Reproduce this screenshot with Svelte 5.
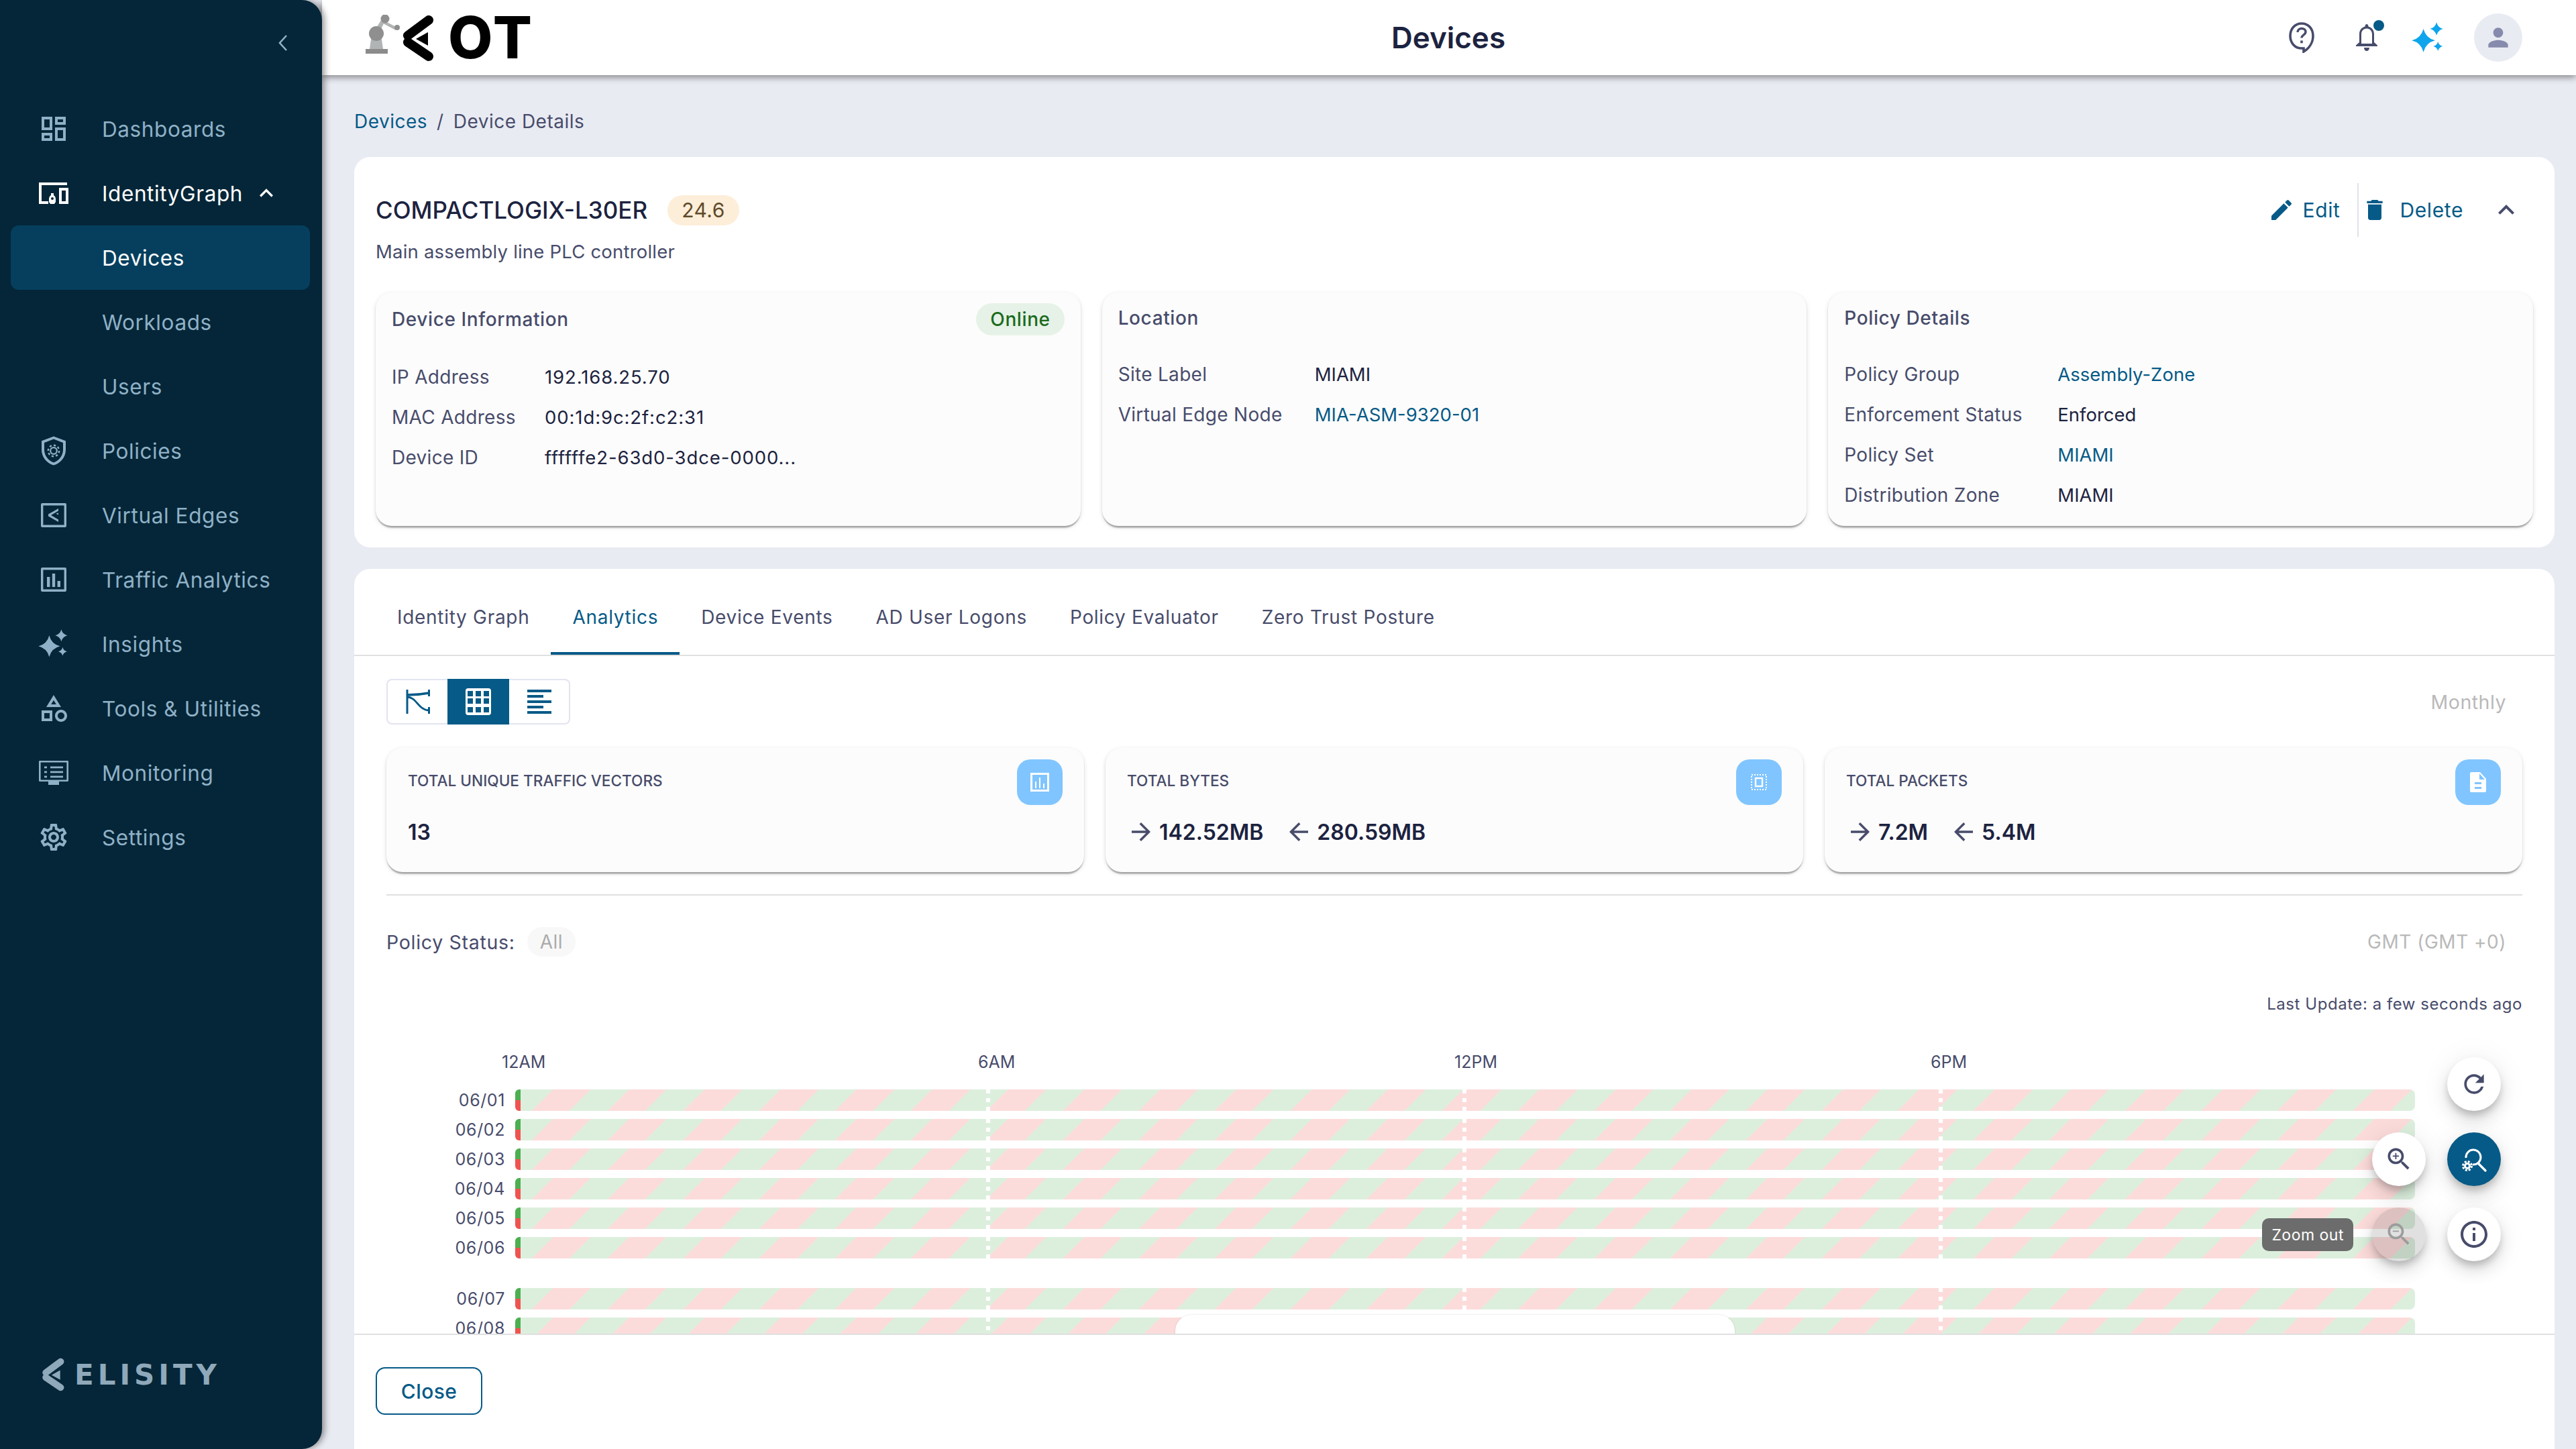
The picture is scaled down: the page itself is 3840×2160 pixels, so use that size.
<script>
  const nav = [
    { label: "Dashboards", icon: "dashboard" },
    { label: "IdentityGraph", icon: "identity", open: true },
    { label: "Devices", sub: true, active: true },
    { label: "Workloads", sub: true },
    { label: "Users", sub: true },
    { label: "Policies", icon: "policy" },
    { label: "Virtual Edges", icon: "edge" },
    { label: "Traffic Analytics", icon: "traffic" },
    { label: "Insights", icon: "insights" },
    { label: "Tools & Utilities", icon: "tools" },
    { label: "Monitoring", icon: "monitor" },
    { label: "Settings", icon: "settings" },
  ];

  const tabs = ["Identity Graph", "Analytics", "Device Events", "AD User Logons", "Policy Evaluator", "Zero Trust Posture"];

  const deviceInfo = [
    ["IP Address", "192.168.25.70"],
    ["MAC Address", "00:1d:9c:2f:c2:31"],
    ["Device ID", "ffffffe2-63d0-3dce-0000..."],
  ];
  const location = [
    ["Site Label", "MIAMI"],
    ["Virtual Edge Node", "MIA-ASM-9320-01", true],
  ];
  const policy = [
    ["Policy Group", "Assembly-Zone", true],
    ["Enforcement Status", "Enforced"],
    ["Policy Set", "MIAMI", true],
    ["Distribution Zone", "MIAMI"],
  ];

  const hours = ["12AM", "6AM", "12PM", "6PM"];
  const days = ["06/01", "06/02", "06/03", "06/04", "06/05", "06/06", "06/07", "06/08"];
  const gridLines = [694, 1404, 2114];

  const paths = {
    edit: "M3 17.25V21h3.75L17.81 9.94l-3.75-3.75L3 17.25zM20.71 7.04a.9959.9959 0 0 0 0-1.41l-2.34-2.34a.9959.9959 0 0 0-1.41 0l-1.83 1.83 3.75 3.75 1.83-1.83z",
    trash: "M6 19c0 1.1.9 2 2 2h8c1.1 0 2-.9 2-2V7H6v12zM19 4h-3.5l-1-1h-5l-1 1H5v2h14V4z",
    up: "M7.41 15.41 12 10.83l4.59 4.58L18 14l-6-6-6 6z",
    person: "M12 12c2.21 0 4-1.79 4-4s-1.79-4-4-4-4 1.79-4 4 1.79 4 4 4zm0 2c-2.67 0-8 1.34-8 4v2h16v-2c0-2.66-5.33-4-8-4z",
    forward: "M12 4l-1.41 1.41L16.17 11H4v2h12.17l-5.58 5.59L12 20l8-8z",
    back: "M20 11H7.83l5.59-5.59L12 4l-8 8 8 8 1.41-1.41L7.83 13H20v-2z",
    zoomIn: "M15.5 14h-.79l-.28-.27C15.41 12.59 16 11.11 16 9.5 16 5.91 13.09 3 9.5 3S3 5.91 3 9.5 5.91 16 9.5 16c1.61 0 3.09-.59 4.23-1.57l.27.28v.79l5 4.99L20.49 19l-4.99-5zm-6 0C7.01 14 5 11.99 5 9.5S7.01 5 9.5 5 14 7.01 14 9.5 11.99 14 9.5 14zm.5-7H9v2H7v1h2v2h1v-2h2V9h-2z",
    zoomOut: "M15.5 14h-.79l-.28-.27C15.41 12.59 16 11.11 16 9.5 16 5.91 13.09 3 9.5 3S3 5.91 3 9.5 5.91 16 9.5 16c1.61 0 3.09-.59 4.23-1.57l.27.28v.79l5 4.99L20.49 19l-4.99-5zm-6 0C7.01 14 5 11.99 5 9.5S7.01 5 9.5 5 14 7.01 14 9.5 11.99 14 9.5 14zM7 9h5v1H7z",
    refresh: "M17.65 6.35C16.2 4.9 14.21 4 12 4c-4.42 0-7.99 3.58-7.99 8s3.57 8 7.99 8c3.73 0 6.84-2.55 7.73-6h-2.08c-.82 2.33-3.04 4-5.65 4-3.31 0-6-2.69-6-6s2.69-6 6-6c1.66 0 3.14.69 4.22 1.78L13 11h7V4l-2.35 2.35z",
    info: "M11 7h2v2h-2zm0 4h2v6h-2zm1-9C6.48 2 2 6.48 2 12s4.48 10 10 10 10-4.48 10-10S17.52 2 12 2zm0 18c-4.41 0-8-3.59-8-8s3.59-8 8-8 8 3.59 8 8-3.59 8-8 8z",
    dashboard: "M19 5v2h-4V5h4M9 5v6H5V5h4m10 8v6h-4v-6h4M9 17v2H5v-2h4M21 3h-8v6h8V3zM11 3H3v10h8V3zm10 8h-8v10h8V11zm-10 4H3v6h8v-6z",
    tools: "M12 2l-5.5 9h11L12 2zm0 3.84L13.93 9h-3.87L12 5.84zM17.5 13c-2.49 0-4.5 2.01-4.5 4.5s2.01 4.5 4.5 4.5 4.5-2.01 4.5-4.5-2.01-4.5-4.5-4.5zm0 7c-1.38 0-2.5-1.12-2.5-2.5s1.12-2.5 2.5-2.5 2.5 1.12 2.5 2.5-1.12 2.5-2.5 2.5zM3 21.5h8v-8H3v8zm2-6h4v4H5v-4z",
    settings: "M19.43 12.98c.04-.32.07-.64.07-.98 0-.34-.03-.66-.07-.98l2.11-1.65c.19-.15.24-.42.12-.64l-2-3.46c-.09-.16-.26-.25-.44-.25-.06 0-.12.01-.17.03l-2.49 1c-.52-.4-1.08-.73-1.69-.98l-.38-2.65C14.46 2.18 14.25 2 14 2h-4c-.25 0-.46.18-.49.42l-.38 2.65c-.61.25-1.17.59-1.69.98l-2.49-1c-.06-.02-.12-.03-.18-.03-.17 0-.34.09-.43.25l-2 3.46c-.13.22-.07.49.12.64l2.11 1.65c-.04.32-.07.65-.07.98 0 .33.03.66.07.98l-2.11 1.65c-.19.15-.24.42-.12.64l2 3.46c.09.16.26.25.44.25.06 0 .12-.01.17-.03l2.49-1c.52.4 1.08.73 1.69.98l.38 2.65c.03.24.24.42.49.42h4c.25 0 .46-.18.49-.42l.38-2.65c.61-.25 1.17-.59 1.69-.98l2.49 1c.06.02.12.03.18.03.17 0 .34-.09.43-.25l2-3.46c.12-.22.07-.49-.12-.64l-2.11-1.65zm-1.98-1.71c.04.31.05.52.05.73 0 .21-.02.43-.05.73l-.14 1.13.89.7 1.08.84-.7 1.21-1.27-.51-1.04-.42-.9.68c-.43.32-.84.56-1.25.73l-1.06.43-.16 1.13-.2 1.35h-1.4l-.19-1.35-.16-1.13-1.06-.43c-.43-.18-.83-.41-1.23-.71l-.91-.7-1.06.43-1.27.51-.7-1.21 1.08-.84.89-.7-.14-1.13c-.03-.31-.05-.54-.05-.74s.02-.43.05-.73l.14-1.13-.89-.7-1.08-.84.7-1.21 1.27.51 1.04.42.9-.68c.43-.32.84-.56 1.25-.73l1.06-.43.16-1.13.2-1.35h1.39l.19 1.35.16 1.13 1.06.43c.43.18.83.41 1.23.71l.91.7 1.06-.43 1.27-.51.7 1.21-1.07.85-.89.7.14 1.13zM12 8c-2.21 0-4 1.79-4 4s1.79 4 4 4 4-1.79 4-4-1.79-4-4-4zm0 6c-1.1 0-2-.9-2-2s.9-2 2-2 2 .9 2 2-.9 2-2 2z",
  };

  function star(cx, cy, r) {
    const k = r * 0.2;
    return `M${cx} ${cy - r}Q${cx + k} ${cy - k} ${cx + r} ${cy}Q${cx + k} ${cy + k} ${cx} ${cy + r}Q${cx - k} ${cy + k} ${cx - r} ${cy}Q${cx - k} ${cy - k} ${cx} ${cy - r}Z`;
  }
  const sparkles = star(9.5, 14, 8) + star(18.5, 6, 4.5) + star(19.5, 18, 3.2);
</script>

{#snippet navIcon(name)}
  <svg class="nav-icon" viewBox="0 0 24 24" width="48" height="48" fill="currentColor">
    {#if name === "identity"}
      <path d="M1 4h21v2H3v12h5v2H1zM16 8h7v12h-7zM18 10v8h3v-8zM10 12h2v1.500a3 3 0 0 1 1.500 2.500v2.500L12.500 20h-3l-1-1.500V16A3 3 0 0 1 10 13.500zM11 15a1 1 0 1 0 0 2 1 1 0 0 0 0-2z" fill-rule="evenodd"/>
    {:else if name === "policy"}
      <path d="M12 1.2 21 4.6v6.6c0 5.300-3.800 10-9 11.600-5.200-1.600-9-6.300-9-11.600V4.600zM12 3.300 5 6v5.200c0 4.200 2.900 8 7 9.500 4.100-1.500 7-5.300 7-9.500V6z" fill-rule="evenodd"/>
      <circle cx="12" cy="12" r="2.400" fill="none" stroke="currentColor" stroke-width="1.100"/>
      <circle cx="12" cy="12" r="4.100" fill="none" stroke="currentColor" stroke-width="1.200" stroke-dasharray="1.600 1.600"/>
    {:else if name === "edge"}
      <path d="M3.500 3h17a1 1 0 0 1 1 1v16a1 1 0 0 1-1 1h-17a1 1 0 0 1-1-1V4a1 1 0 0 1 1-1zM4.200 4.700v14.600h15.600V4.700z" fill-rule="evenodd"/>
      <path d="M15.500 7v1.800L10 12l5.500 3.200V17L8 12.700v-1.400zM15.500 10.300v1.500l-1.800-.9z"/>
    {:else if name === "traffic"}
      <path d="M3.500 3h17a1 1 0 0 1 1 1v16a1 1 0 0 1-1 1h-17a1 1 0 0 1-1-1V4a1 1 0 0 1 1-1zM4.200 4.700v14.600h15.600V4.700zM7 10h2.200v7.500H7zM10.900 7.500h2.200v10h-2.200zM14.800 13h2.200v4.500h-2.200z" fill-rule="evenodd"/>
    {:else if name === "insights"}
      <path d={sparkles} transform="translate(-.8 -.4)"/>
    {:else if name === "monitor"}
      <path d="M1.600 3h20.800c.3 0 .6.300.6.600v14.300c0 .3-.3.600-.6.600H16V21H8v-2.500H1.600c-.3 0-.6-.3-.6-.6V3.600c0-.3.300-.6.600-.6zM2.300 4.300v12.900h19.400V4.300z" fill-rule="evenodd"/>
      <path d="M5 7.300h2v1.300H5zM9.500 7.300H19v1.300H9.500zM5 10.800h2v1.300H5zM9.500 10.800H19v1.300H9.500zM5 14.300h2v1.300H5zM9.500 14.300H19v1.300H9.500z"/>
    {:else}
      <path d={paths[name]}/>
    {/if}
  </svg>
{/snippet}

{#snippet mark(color)}
  <path d="M39 8 8 31" stroke={color} stroke-width="14" stroke-linecap="round" fill="none"/>
  <path d="M8 41 39 62" stroke={color} stroke-width="14" stroke-linecap="round" fill="none"/>
  <path d="M38 26 20 36l18 10z" fill={color}/>
{/snippet}

<div class="app">
  <aside class="sidebar">
    <div class="collapse">
      <svg viewBox="0 0 13 24" width="13" height="24"><path d="M12 1 2 12l10 11" fill="none" stroke="#8fb1c7" stroke-width="2.600"/></svg>
    </div>
    <nav class="nav">
      {#each nav as item}
        <div class="nav-row" class:active={item.active} class:open={item.open}>
          {#if item.icon}
            {@render navIcon(item.icon)}
          {:else}
            <span class="nav-spacer"></span>
          {/if}
          <span>{item.label}</span>
          {#if item.open}
            <svg class="nav-caret" viewBox="0 0 24 24" width="40" height="40" fill="currentColor"><path d={paths.up}/></svg>
          {/if}
        </div>
      {/each}
    </nav>
    <div class="brand">
      <svg viewBox="0 0 46 70" width="38" height="50">{@render mark("#8fa9ba")}</svg>
      <span>ELISITY</span>
    </div>
  </aside>

  <main class="main">
    <header class="topbar">
      <div class="logo">
        <svg class="logo-arm" viewBox="0 0 60 60" width="60" height="60">
          <rect x="1" y="51" width="33" height="7" fill="#8b8b8b"/>
          <path d="M7 51 10 30h14l3 21z" fill="#b1b4b5"/>
          <path d="M12 28 24 8l5 3-9 19z" fill="#b1b4b5"/>
          <path d="M29 9 48 19l-2 4-19-10z" fill="#b1b4b5"/>
          <circle cx="17" cy="28" r="11" fill="#8f8f8f"/>
          <circle cx="30" cy="6" r="6.500" fill="#8f8f8f"/>
          <circle cx="48" cy="19" r="4" fill="#8f8f8f"/>
        </svg>
        <svg class="logo-mark" viewBox="0 0 46 70" width="46" height="70">{@render mark("#000")}</svg>
        <span class="logo-text">OT</span>
      </div>
      <h1>Devices</h1>
      <div class="top-actions">
        <svg class="help" viewBox="0 0 38 46" width="38" height="46">
          <path d="M19 39C9 39 2 31 2 20.500S9 2 19 2s17 8 17 18.500c0 9-5 18-14 23.500v-5z" fill="none" stroke="#484c6b" stroke-width="3.600"/>
          <path d="M13 15c0-3.500 2.800-5.500 6-5.500 3.500 0 6 2 6 5 0 4.500-6 4.500-6 9" fill="none" stroke="#484c6b" stroke-width="3.400"/>
          <rect x="17.200" y="27.500" width="3.600" height="3.800" fill="#484c6b"/>
        </svg>
        <div class="bell">
          <svg viewBox="0 0 32 40" width="32" height="40" fill="#484c6b">
            <path d="M16 0c1.400 0 2.400 1 2.500 3.500C24 5 27 9.500 27 15v12l5 4.500V33H0v-1.500L5 27V15c0-5.500 3-10 8.500-11.500C13.600 1 14.600 0 16 0zM16 6.500c-4.500 0-8 3.500-8 8.500v14h16V15c0-5-3.500-8.500-8-8.500zM12 35h8c0 3-1.800 5-4 5s-4-2-4-5z" fill-rule="evenodd"/>
          </svg>
          <span class="bell-dot"></span>
        </div>
        <svg class="spark" viewBox="0 0 24 24" width="52" height="52" fill="#0ea5ec"><path d={sparkles}/></svg>
        <div class="avatar">
          <svg viewBox="0 0 24 24" width="44" height="44" fill="#868aac"><path d={paths.person}/></svg>
        </div>
      </div>
    </header>

    <div class="content">
      <div class="crumbs">
        <span class="link">Devices</span>
        <span class="crumb-sep">/</span>
        <span>Device Details</span>
      </div>

      <section class="card detail">
        <div class="title-row">
          <h2>COMPACTLOGIX-L30ER</h2>
          <span class="version">24.6</span>
          <div class="actions">
            <svg viewBox="0 0 24 24" width="40" height="40" fill="#065a87"><path d={paths.edit}/></svg>
            <span class="action-label edit-label">Edit</span>
            <span class="action-sep"></span>
            <svg viewBox="0 0 24 24" width="40" height="40" fill="#065a87"><path d={paths.trash}/></svg>
            <span class="action-label">Delete</span>
            <svg class="action-caret" viewBox="0 0 24 24" width="48" height="48" fill="#484c6b"><path d={paths.up}/></svg>
          </div>
        </div>
        <p class="desc">Main assembly line PLC controller</p>

        <div class="info-grid">
          <div class="info-card">
            <div class="info-head tall">
              <span>Device Information</span>
              <span class="online">Online</span>
            </div>
            <dl class="fields device-fields">
              {#each deviceInfo as [k, v]}
                <dt>{k}</dt>
                <dd>{v}</dd>
              {/each}
            </dl>
          </div>
          <div class="info-card">
            <div class="info-head"><span>Location</span></div>
            <dl class="fields location-fields">
              {#each location as [k, v, isLink]}
                <dt>{k}</dt>
                <dd class:link={isLink}>{v}</dd>
              {/each}
            </dl>
          </div>
          <div class="info-card">
            <div class="info-head"><span>Policy Details</span></div>
            <dl class="fields policy-fields">
              {#each policy as [k, v, isLink]}
                <dt>{k}</dt>
                <dd class:link={isLink}>{v}</dd>
              {/each}
            </dl>
          </div>
        </div>
      </section>

      <section class="card analytics">
        <div class="tabs">
          {#each tabs as tab}
            <div class="tab" class:current={tab === "Analytics"}>{tab}</div>
          {/each}
        </div>

        <div class="scroll">
          <div class="toolbar">
            <div class="views">
              <span class="view">
                <svg viewBox="0 0 36 36" width="36" height="36" fill="none" stroke="#065a87" stroke-width="3">
                  <path d="M2 0v36"/>
                  <path d="M34.500 0v10M34.500 26v10"/>
                  <path d="M2 8C14 8 24 7 34.500 5" stroke-width="3.400"/>
                  <path d="M2 11C16 11 18 30 34.500 31" stroke-width="2.800"/>
                </svg>
              </span>
              <span class="view selected">
                <svg viewBox="0 0 38 40" width="38" height="40">
                  <rect width="38" height="40" rx="4" fill="#fff"/>
                  {#each [4, 15, 28] as y}
                    {#each [3, 15, 27] as x}
                      <rect {x} {y} width="8" height="8" fill="#065a87"/>
                    {/each}
                  {/each}
                </svg>
              </span>
              <span class="view">
                <svg viewBox="0 0 36 36" width="36" height="36" fill="#065a87">
                  <rect width="36" height="4"/><rect y="8" width="24" height="4"/><rect y="16" width="36" height="4"/><rect y="24" width="24" height="4"/><rect y="32" width="36" height="4"/>
                </svg>
              </span>
            </div>
            <span class="muted monthly">Monthly</span>
          </div>

          <div class="kpis">
            <div class="kpi">
              <div class="kpi-label">Total Unique Traffic Vectors</div>
              <div class="kpi-value"><b>13</b></div>
              <div class="kpi-icon">
                <svg viewBox="0 0 28 28" width="28" height="28" fill="#fff">
                  <path d="M0 0h28v28H0zM3 3v22h22V3zM7 13h2v10H7zM13 7h2v16h-2zM19 16h2v7h-2z" fill-rule="evenodd"/>
                </svg>
              </div>
            </div>
            <div class="kpi">
              <div class="kpi-label">Total Bytes</div>
              <div class="kpi-value">
                <svg viewBox="0 0 24 24" width="42" height="42" fill="#484c6b"><path d={paths.forward}/></svg>
                <b>142.52MB</b>
                <svg class="arrow-back" viewBox="0 0 24 24" width="42" height="42" fill="#484c6b"><path d={paths.back}/></svg>
                <b>280.59MB</b>
              </div>
              <div class="kpi-icon">
                <svg viewBox="0 0 28 28" width="28" height="28" fill="none" stroke="#fff">
                  <rect x="3" y="3" width="22" height="22" stroke-width="2" stroke-dasharray="2 2"/>
                  <rect x="9" y="8" width="10" height="12" stroke-width="2.400"/>
                </svg>
              </div>
            </div>
            <div class="kpi">
              <div class="kpi-label">Total Packets</div>
              <div class="kpi-value">
                <svg viewBox="0 0 24 24" width="42" height="42" fill="#484c6b"><path d={paths.forward}/></svg>
                <b>7.2M</b>
                <svg class="arrow-back" viewBox="0 0 24 24" width="42" height="42" fill="#484c6b"><path d={paths.back}/></svg>
                <b>5.4M</b>
              </div>
              <div class="kpi-icon">
                <svg viewBox="0 0 24 30" width="24" height="30" fill="#fff">
                  <path d="M2 0h13l9 10v18a2 2 0 0 1-2 2H2a2 2 0 0 1-2-2V2a2 2 0 0 1 2-2zM14 2v9h8zM7 15v3h10v-3zM7 22v3h10v-3z" fill-rule="evenodd"/>
                </svg>
              </div>
            </div>
          </div>

          <div class="rule"></div>

          <div class="filters">
            <span class="filter-label">Policy Status:</span>
            <span class="all">All</span>
            <span class="muted right">GMT (GMT +0)</span>
          </div>

          <div class="updated">Last Update: a few seconds ago</div>

          <div class="chart">
            <div class="hours">
              {#each hours as h}
                <span>{h}</span>
              {/each}
            </div>
            {#each days as d, i}
              <div class="day" class:week-end={i === 5}>
                <span class="day-label">{d}</span>
                <span class="marker"></span>
                <div class="bar">
                  {#each gridLines as x}
                    <span class="grid-line" style="left: {x}px"></span>
                  {/each}
                </div>
              </div>
            {/each}
          </div>

          <div class="popup"></div>
        </div>

        <div class="fabs">
          <span></span>
          <div class="fab"><svg viewBox="0 0 24 24" width="44" height="44" fill="#484c6b"><path d={paths.refresh}/></svg></div>
          <div class="fab"><svg viewBox="0 0 24 24" width="44" height="44" fill="#484c6b"><path d={paths.zoomIn}/></svg></div>
          <div class="fab primary">
            <svg viewBox="0 0 44 44" width="44" height="44" fill="none" stroke="#fff" stroke-width="3">
              <path d="M10 20a11 11 0 1 1 10 10"/>
              <path d="M28 28 39 39" stroke-linecap="round" stroke-width="3.400"/>
              <circle cx="12" cy="32" r="3.500" stroke-width="3"/>
              <circle cx="12" cy="32" r="6.500" stroke-width="3" stroke-dasharray="3 2.100"/>
            </svg>
          </div>
          <div class="fab disabled">
            <svg viewBox="0 0 24 24" width="44" height="44" fill="#9c9c9c"><path d={paths.zoomOut}/></svg>
            <div class="tooltip">Zoom out</div>
          </div>
          <div class="fab"><svg viewBox="0 0 24 24" width="48" height="48" fill="#484c6b"><path d={paths.info}/></svg></div>
        </div>

        <footer class="footer">
          <button class="close">Close</button>
        </footer>
      </section>
    </div>
  </main>
</div>

<style>
  :global(body) {
    margin: 0;
    background: #e9ebf3;
  }
  .app {
    display: flex;
    width: 3840px;
    height: 2160px;
    overflow: hidden;
    background: #e9ebf3;
    font-family: Inter, "Noto Sans", sans-serif;
    font-size: 28px;
    letter-spacing: 0.5px;
    color: #484c6b;
  }

  /* sidebar */
  .sidebar {
    position: relative;
    z-index: 3;
    display: flex;
    flex-direction: column;
    flex: 0 0 480px;
    height: 2160px;
    background: #052638;
    border-radius: 0 30px 30px 0;
    box-shadow: 4px 0 10px rgba(0, 0, 0, 0.4);
    color: #8fb1c7;
  }
  .collapse {
    display: flex;
    justify-content: flex-end;
    height: 92px;
    padding: 52px 52px 0 0;
  }
  .nav {
    display: flex;
    flex-direction: column;
  }
  .nav-row {
    display: flex;
    align-items: center;
    gap: 48px;
    height: 96px;
    margin: 0 18px 0 16px;
    padding-left: 40px;
    border-radius: 12px;
    font-size: 31.5px;
    letter-spacing: 0.6px;
  }
  .nav-spacer {
    width: 48px;
  }
  .nav-icon {
    flex: none;
  }
  .nav-row.open {
    color: #fff;
  }
  .nav-row.active {
    background: #063f5e;
    color: #fff;
  }
  .nav-caret {
    margin-left: -33px;
  }
  .brand {
    display: flex;
    align-items: center;
    gap: 13px;
    margin-top: auto;
    padding: 0 0 86px 60px;
    font-family: "DejaVu Sans", sans-serif;
    font-weight: 700;
    font-size: 42px;
    letter-spacing: 6px;
    color: #8fa9ba;
  }

  /* header */
  .main {
    flex: 1;
    display: flex;
    flex-direction: column;
    min-width: 0;
  }
  .topbar {
    position: relative;
    z-index: 2;
    display: grid;
    grid-template-columns: 1fr auto 1fr;
    align-items: center;
    flex: 0 0 112px;
    padding: 0 80px 0 64px;
    background: #fff;
    box-shadow: 0 3px 10px rgba(0, 0, 0, 0.45);
  }
  h1 {
    margin: 0 0 0 14px;
    font-size: 44px;
    font-weight: 600;
    letter-spacing: 0;
    color: #1c2340;
  }
  .logo {
    display: flex;
    align-items: center;
  }
  .logo-arm {
    margin-top: -8px;
  }
  .logo-mark {
    margin-left: -4px;
    margin-top: 2px;
  }
  .logo-text {
    margin-left: 22px;
    font-size: 86px;
    line-height: 1;
    font-weight: 800;
    letter-spacing: 3px;
    color: #000;
  }
  .top-actions {
    display: flex;
    align-items: center;
    justify-content: flex-end;
  }
  .bell {
    position: relative;
    display: flex;
    margin-left: 62px;
  }
  .bell-dot {
    position: absolute;
    top: -6px;
    left: 26px;
    width: 16px;
    height: 16px;
    border-radius: 50%;
    background: #065a87;
  }
  .spark {
    margin-left: 48px;
  }
  .avatar {
    display: flex;
    align-items: center;
    justify-content: center;
    width: 72px;
    height: 72px;
    margin-left: 44px;
    border-radius: 50%;
    background: #e9ebf3;
  }

  /* page */
  .content {
    flex: 1;
    display: flex;
    flex-direction: column;
    gap: 32px;
    padding: 0 32px 0 48px;
    min-height: 0;
  }
  .crumbs {
    display: flex;
    align-items: center;
    gap: 14px;
    flex: 0 0 138px;
    margin-bottom: -48px;
  }
  .link {
    color: #065a87;
  }
  .card {
    background: #fff;
    border-radius: 24px;
  }
  .detail {
    flex: 0 0 582px;
    padding: 39px 32px 32px;
    box-sizing: border-box;
  }
  .title-row {
    display: flex;
    align-items: center;
    height: 80px;
  }
  h2 {
    margin: 0;
    font-size: 35px;
    font-weight: 500;
    letter-spacing: 0;
    color: #1c2340;
  }
  .version {
    margin-left: 30px;
    padding: 0 21px;
    height: 45px;
    line-height: 45px;
    border-radius: 24px;
    background: #fdeed9;
    color: #5f4b2b;
    font-size: 30px;
  }
  .actions {
    display: flex;
    align-items: center;
    margin-left: auto;
    margin-right: 16px;
    font-size: 30px;
    letter-spacing: 0.6px;
  }
  .action-label {
    margin-left: 17px;
    color: #065a87;
  }
  .edit-label {
    margin-left: 12px;
    margin-right: 26px;
  }
  .action-sep {
    width: 2px;
    height: 80px;
    margin-right: 4px;
    background: #dfe1ec;
  }
  .action-caret {
    margin-left: 40px;
  }
  .desc {
    height: 44px;
    margin: 0 0 39px;
    line-height: 44px;
    font-size: 27.5px;
    letter-spacing: 0.2px;
  }
  .info-grid {
    display: grid;
    grid-template-columns: repeat(3, 1fr);
    gap: 32px;
  }
  .info-card {
    height: 348px;
    padding: 16px 24px;
    box-sizing: border-box;
    background: #fcfcfc;
    border-radius: 24px;
    box-shadow: 0 5px 2px -2px rgba(0, 0, 0, 0.2), 0 2px 2px 0 rgba(0, 0, 0, 0.14), 0 2px 7px 0 rgba(0, 0, 0, 0.12);
  }
  .info-head {
    display: flex;
    align-items: center;
    justify-content: space-between;
    height: 44px;
    margin-bottom: 32px;
    font-weight: 500;
    letter-spacing: 0.6px;
  }
  .info-head.tall {
    height: 48px;
  }
  .online {
    padding: 0 21px;
    height: 48px;
    line-height: 48px;
    border-radius: 24px;
    background: #e6f2e7;
    color: #1b6b1e;
  }
  .fields {
    display: grid;
    grid-auto-rows: 60px;
    align-items: center;
    margin: 0;
    letter-spacing: 0.3px;
  }
  .fields dd {
    margin: 0;
    font-size: 27.5px;
    letter-spacing: 0;
    color: #1c2340;
  }
  .fields dd.link {
    color: #065a87;
  }
  .device-fields {
    grid-template-columns: 228px 1fr;
  }
  .device-fields dd {
    letter-spacing: 0.9px;
  }
  .location-fields {
    grid-template-columns: 293px 1fr;
  }
  .policy-fields {
    grid-template-columns: 318px 1fr;
  }

  /* analytics panel */
  .analytics {
    position: relative;
    flex: 1;
    display: flex;
    flex-direction: column;
    min-height: 0;
    border-radius: 24px 24px 0 0;
  }
  .tabs {
    display: flex;
    flex: none;
    height: 128px;
    padding-left: 32px;
    border-bottom: 2px solid #e0e0e0;
    letter-spacing: 0.7px;
  }
  .tab {
    display: flex;
    align-items: center;
    padding: 20px 32px 0;
    border-bottom: 4px solid transparent;
  }
  .tab.current {
    border-bottom-color: #065a87;
    color: #065a87;
  }
  .scroll {
    position: relative;
    flex: 1;
    min-height: 0;
    overflow: hidden;
    padding: 34px 48px 0;
  }
  .toolbar {
    display: flex;
    align-items: center;
    justify-content: space-between;
    padding-right: 24px;
  }
  .views {
    display: flex;
    height: 68px;
    border: 2px solid #e2e4f0;
    box-sizing: border-box;
    border-radius: 8px;
  }
  .view {
    display: flex;
    align-items: center;
    justify-content: center;
    width: 89px;
  }
  .view.selected {
    width: 92px;
    margin: -2px 0;
    background: #065a87;
  }
  .muted {
    color: #b9b9b9;
  }
  .monthly {
    font-size: 28.5px;
  }
  .kpis {
    display: grid;
    grid-template-columns: repeat(3, 1fr);
    gap: 32px;
    margin-top: 35px;
  }
  .kpi {
    position: relative;
    height: 185px;
    padding: 32px 32px 0;
    box-sizing: border-box;
    background: #fcfcfc;
    border-radius: 24px;
    box-shadow: 0 5px 2px -2px rgba(0, 0, 0, 0.2), 0 2px 2px 0 rgba(0, 0, 0, 0.14), 0 2px 7px 0 rgba(0, 0, 0, 0.12);
  }
  .kpi-label {
    height: 34px;
    line-height: 34px;
    font-size: 22.6px;
    font-weight: 500;
    letter-spacing: 0;
    text-transform: uppercase;
  }
  .kpi-value {
    display: flex;
    align-items: center;
    gap: 6px;
    height: 48px;
    margin-top: 35px;
  }
  .kpi-value b {
    font-size: 32px;
    font-weight: 600;
    letter-spacing: 0;
    color: #1c2340;
  }
  .arrow-back {
    margin-left: 26px;
  }
  .kpi-icon {
    position: absolute;
    top: 17px;
    right: 32px;
    display: flex;
    align-items: center;
    justify-content: center;
    width: 68px;
    height: 68px;
    border-radius: 20px;
    background: #80c5ff;
  }
  .rule {
    height: 2px;
    margin-top: 33px;
    background: #e0e0e0;
  }
  .filters {
    display: flex;
    align-items: center;
    height: 44px;
    margin-top: 47px;
    padding-right: 24px;
  }
  .filter-label {
    font-size: 28.5px;
    letter-spacing: 0.7px;
  }
  .all {
    margin-left: 18px;
    padding: 0 19px;
    height: 44px;
    line-height: 44px;
    border-radius: 22px;
    background: #f8f8f8;
    color: #ababab;
  }
  .right {
    margin-left: auto;
  }
  .updated {
    height: 36px;
    margin-top: 53px;
    line-height: 36px;
    text-align: right;
    font-size: 24px;
    letter-spacing: 0.55px;
  }
  .chart {
    margin-top: 50px;
  }
  .hours {
    display: flex;
    height: 36px;
    margin-bottom: 23px;
    padding-left: 172px;
    line-height: 36px;
    font-size: 25px;
    letter-spacing: 0;
  }
  .hours span {
    width: 710px;
  }
  .day {
    display: flex;
    align-items: center;
    height: 32px;
    margin-bottom: 12px;
  }
  .day.week-end {
    margin-bottom: 44px;
  }
  .day-label {
    width: 177px;
    margin-right: 15px;
    text-align: right;
    font-size: 25px;
    letter-spacing: 0.6px;
  }
  .marker {
    width: 8px;
    height: 32px;
    border-radius: 6px 0 0 6px;
    background: linear-gradient(180deg, #4caf50 50%, #ef5350 50%);
  }
  .bar {
    position: relative;
    width: 2824px;
    height: 32px;
    border-radius: 0 8px 8px 0;
    background: repeating-linear-gradient(135deg, #dcefdd 0 34px, #fcdcdb 34px 74px, #dcefdd 74px 80px);
  }
  .grid-line {
    position: absolute;
    top: 0;
    width: 6px;
    height: 32px;
    background: repeating-linear-gradient(180deg, #fff 0 6px, transparent 6px 13px);
  }
  .popup {
    position: absolute;
    top: 982px;
    left: 1224px;
    width: 834px;
    height: 100px;
    border-radius: 24px 24px 0 0;
    background: #fff;
    box-shadow: 0 0 3px rgba(0, 0, 0, 0.12);
  }

  .fabs {
    position: absolute;
    top: 728px;
    left: 3008px;
    display: grid;
    grid-template-columns: 80px 80px;
    grid-auto-rows: 80px;
    gap: 32px;
  }
  .fab {
    position: relative;
    display: flex;
    align-items: center;
    justify-content: center;
    border-radius: 50%;
    background: #fff;
    box-shadow: 0 8px 12px -2px rgba(0, 0, 0, 0.2), 0 15px 25px 0 rgba(0, 0, 0, 0.1), 0 3px 44px rgba(0, 0, 0, 0.08);
  }
  .fab.primary {
    background: #065a87;
  }
  .fab.disabled {
    background: rgba(0, 0, 0, 0.12);
  }
  .tooltip {
    position: absolute;
    top: 16px;
    right: 108px;
    display: flex;
    align-items: center;
    height: 49px;
    padding: 0 14px;
    border-radius: 10px;
    background: #6c6c6c;
    color: #fff;
    font-size: 23px;
    white-space: nowrap;
  }

  .footer {
    position: relative;
    flex: 0 0 172px;
    box-sizing: border-box;
    padding: 48px 32px 0;
    border-top: 2px solid #e0e0e0;
    background: #fff;
  }
  .close {
    width: 159px;
    height: 71px;
    padding: 0;
    border: 2.500px solid #065a87;
    border-radius: 14px;
    background: #fff;
    color: #065a87;
    font: 500 30px Inter, sans-serif;
    letter-spacing: 0.4px;
  }
</style>
